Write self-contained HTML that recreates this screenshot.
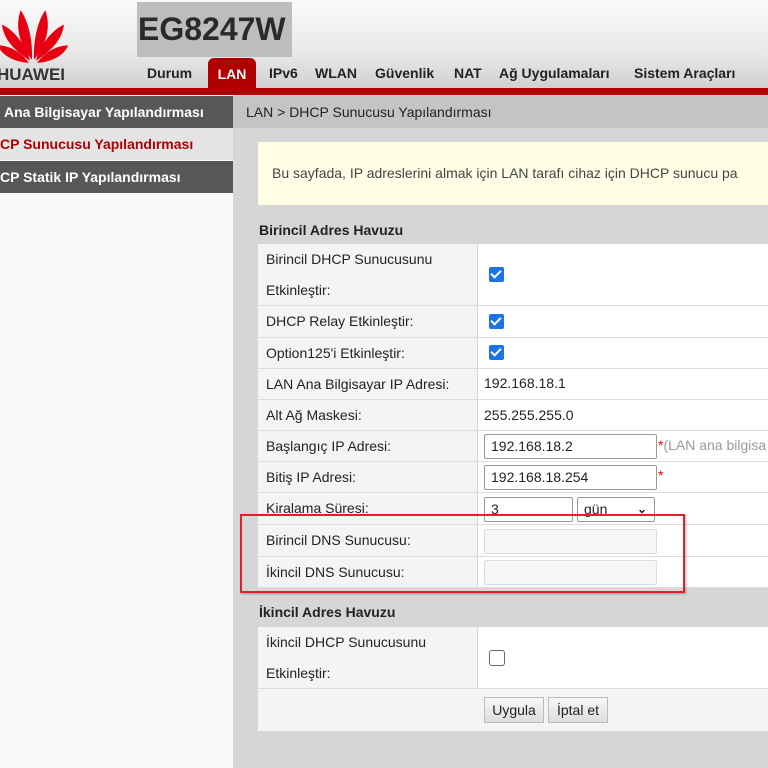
<!DOCTYPE html>
<html><head><meta charset="utf-8"><style>
*{margin:0;padding:0;box-sizing:border-box}
body{width:768px;height:768px;overflow:hidden;background:#d6d6d6;font-family:"Liberation Sans",Arial,sans-serif;position:relative;font-size:14px;color:#222}
.a{position:absolute}
#hdr{left:0;top:0;width:768px;height:90px;background:linear-gradient(#fafafa,#e8e8e8 60%,#cfcfcf)}
#redbar{left:0;top:88px;width:768px;height:7px;background:#b00000}
#model{left:137px;top:2px;width:155px;height:55px;background:#bdbdbd;font-weight:bold;font-size:32px;color:#2a2a2a;line-height:55px;padding-left:1px}
.nav{top:65px;font-weight:bold;font-size:14px;color:#222}
#lan{left:208px;top:58px;width:48px;height:32px;background:#b00000;border-radius:6px 6px 0 0;color:#fff;font-weight:bold;text-align:center;line-height:32px;font-size:14px}
#side{left:0;top:95px;width:233px;height:673px;background:#fafafa}
.sr{left:0;width:233px;height:32px;line-height:32px;font-size:14px;font-weight:bold;padding-left:4px}
.dk{background:#575757;color:#fff}
#crumb{left:233px;top:96px;width:535px;height:32px;background:#c4c4c4;line-height:32px;padding-left:13px;font-size:14px;color:#222}
#note{left:258px;top:142px;width:510px;height:63px;background:#ffffe6;line-height:62px;padding-left:14px;font-size:14px;color:#444}
.sec{left:259px;font-weight:bold;font-size:14px;color:#222}
.lab{left:258px;width:219px;background:#f4f4f4;padding-left:8px;font-size:14px;color:#222;border-bottom:1px solid #ddd}
.val{left:478px;width:290px;background:#fff;border-bottom:1px solid #ddd}
.chk{width:15px;height:15px;background:#1a73e8;border-radius:2px;position:absolute;left:11px}
.chk:after{content:"";position:absolute;left:4px;top:1px;width:4px;height:8px;border:solid #fff;border-width:0 2px 2px 0;transform:rotate(45deg)}
.inp{position:absolute;left:6px;height:25px;border:1px solid #999;border-radius:2px;background:#fff;padding-left:6px;line-height:23px;font-size:14px}
.dis{border-color:#ddd;background:#f6f6f6}
.vt{position:absolute;left:6px;font-size:14px}
.btn{top:697px;height:26px;border:1px solid #bbb;background:linear-gradient(#f8f8f8,#ddd);font-size:14px;line-height:24px;text-align:center}
</style></head><body>
<div id="hdr" class="a"></div>
<svg class="a" style="left:-4px;top:4px" width="76" height="62" viewBox="0 0 70 60">
<g fill="#e60012">
<path d="M33 54 C22 40 16 24 22 6 C28 14 34 32 33 54Z"/>
<path d="M35 54 C46 40 52 24 46 6 C40 14 34 32 35 54Z"/>
<path d="M31 55 C18 46 6 36 4 20 C14 24 28 40 31 55Z"/>
<path d="M37 55 C50 46 62 36 64 20 C54 24 40 40 37 55Z"/>
<path d="M30 57 C16 56 4 50 0 40 C12 40 24 48 30 57Z"/>
<path d="M38 57 C52 56 64 50 68 40 C56 40 44 48 38 57Z"/>
</g></svg>
<div class="a" style="left:-3px;top:65px;font-size:17px;font-weight:bold;color:#333">HUAWEI</div>
<div id="model" class="a">EG8247W</div>
<div class="a nav" style="left:147px">Durum</div>
<div id="lan" class="a">LAN</div>
<div class="a nav" style="left:269px">IPv6</div>
<div class="a nav" style="left:315px">WLAN</div>
<div class="a nav" style="left:375px">Güvenlik</div>
<div class="a nav" style="left:454px">NAT</div>
<div class="a nav" style="left:499px">Ağ Uygulamaları</div>
<div class="a nav" style="left:634px">Sistem Araçları</div>
<div id="redbar" class="a"></div>
<div id="side" class="a"></div>
<div class="a sr dk" style="top:96px">Ana Bilgisayar Yapılandırması</div>
<div class="a sr" style="top:128px;background:#e4e4e4;color:#b00000;padding-left:0">CP Sunucusu Yapılandırması</div>
<div class="a sr dk" style="top:161px;padding-left:0">CP Statik IP Yapılandırması</div>
<div id="crumb" class="a">LAN &gt; DHCP Sunucusu Yapılandırması</div>
<div id="note" class="a">Bu sayfada, IP adreslerini almak için LAN tarafı cihaz için DHCP sunucu pa</div>
<div class="a sec" style="top:222px">Birincil Adres Havuzu</div>

<div class="a lab" style="top:244px;height:62px;line-height:31px">Birincil DHCP Sunucusunu<br>Etkinleştir:</div>
<div class="a val" style="top:244px;height:62px"><div class="chk" style="top:23px"></div></div>

<div class="a lab" style="top:306px;height:32px;line-height:31px">DHCP Relay Etkinleştir:</div>
<div class="a val" style="top:306px;height:32px"><div class="chk" style="top:8px"></div></div>

<div class="a lab" style="top:338px;height:31px;line-height:30px">Option125'i Etkinleştir:</div>
<div class="a val" style="top:338px;height:31px"><div class="chk" style="top:7px"></div></div>

<div class="a lab" style="top:369px;height:31px;line-height:30px">LAN Ana Bilgisayar IP Adresi:</div>
<div class="a val" style="top:369px;height:31px"><span class="vt" style="top:6px">192.168.18.1</span></div>

<div class="a lab" style="top:400px;height:31px;line-height:30px">Alt Ağ Maskesi:</div>
<div class="a val" style="top:400px;height:31px"><span class="vt" style="top:7px">255.255.255.0</span></div>

<div class="a lab" style="top:431px;height:31px;line-height:30px">Başlangıç IP Adresi:</div>
<div class="a val" style="top:431px;height:31px"><div class="inp" style="top:3px;width:173px">192.168.18.2</div><span class="vt" style="left:180px;top:6px;color:#999"><span style="color:#e00">*</span>(LAN ana bilgisa</span></div>

<div class="a lab" style="top:462px;height:31px;line-height:30px">Bitiş IP Adresi:</div>
<div class="a val" style="top:462px;height:31px"><div class="inp" style="top:3px;width:173px">192.168.18.254</div><span class="vt" style="left:180px;top:5px;color:#e00">*</span></div>

<div class="a lab" style="top:493px;height:32px;line-height:30px">Kiralama Süresi:</div>
<div class="a val" style="top:493px;height:32px"><div class="inp" style="top:4px;width:89px">3</div><div class="inp" style="top:4px;left:99px;width:78px">gün <span style="position:absolute;right:7px;font-weight:bold;font-size:12px">&#8964;</span></div></div>

<div class="a lab" style="top:525px;height:32px;line-height:31px">Birincil DNS Sunucusu:</div>
<div class="a val" style="top:525px;height:32px"><div class="inp dis" style="top:4px;width:173px"></div></div>

<div class="a lab" style="top:557px;height:31px;line-height:31px">İkincil DNS Sunucusu:</div>
<div class="a val" style="top:557px;height:31px"><div class="inp dis" style="top:3px;width:173px"></div></div>

<div class="a" style="left:240px;top:514px;width:445px;height:79px;border:2px solid #e0202a;box-shadow:1px 1px 2px rgba(0,0,0,.3)"></div>

<div class="a sec" style="top:604px">İkincil Adres Havuzu</div>
<div class="a lab" style="top:627px;height:62px;line-height:31px">İkincil DHCP Sunucusunu<br>Etkinleştir:</div>
<div class="a val" style="top:627px;height:62px"><div style="position:absolute;left:11px;top:23px;width:16px;height:16px;border:1px solid #666;border-radius:3px;background:#fff"></div></div>
<div class="a" style="left:258px;top:689px;width:510px;height:42px;background:#f4f4f4"></div>
<div class="a btn" style="left:484px;width:60px">Uygula</div>
<div class="a btn" style="left:548px;width:60px">İptal et</div>
</body></html>
